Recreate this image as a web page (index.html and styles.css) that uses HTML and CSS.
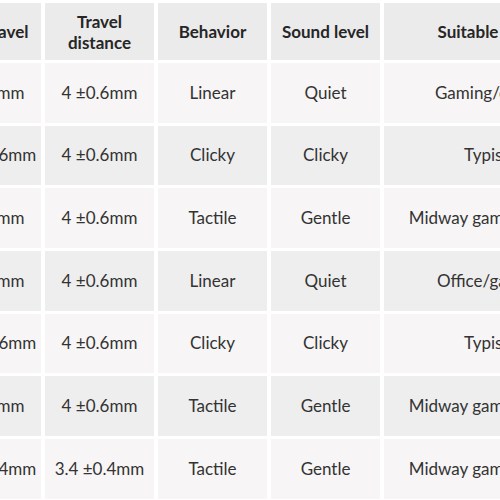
FILE: index.html
```html
<!DOCTYPE html>
<html>
<head>
<meta charset="utf-8">
<link rel="stylesheet" href="styles.css">
</head>
<body>
<div class="viewport">
<table class="spec">
<thead>
<tr>
<th class="cm">Total travel</th>
<th class="cm">Travel distance</th>
<th class="cm">Behavior</th>
<th class="cm">Sound level</th>
<th class="c5">Suitable users</th>
</tr>
</thead>
<tbody>
<tr><td>2 ±0.6mm</td><td>4 ±0.6mm</td><td>Linear</td><td>Quiet</td><td>Gaming/casual</td></tr>
<tr><td>2.25 ±0.6mm</td><td>4 ±0.6mm</td><td>Clicky</td><td>Clicky</td><td>Typists</td></tr>
<tr><td>2 ±0.6mm</td><td>4 ±0.6mm</td><td>Tactile</td><td>Gentle</td><td>Midway gaming/work</td></tr>
<tr><td>2 ±0.6mm</td><td>4 ±0.6mm</td><td>Linear</td><td>Quiet</td><td>Office/gaming</td></tr>
<tr><td>2.25 ±0.6mm</td><td>4 ±0.6mm</td><td>Clicky</td><td>Clicky</td><td>Typists</td></tr>
<tr><td>2 ±0.6mm</td><td>4 ±0.6mm</td><td>Tactile</td><td>Gentle</td><td>Midway gaming/work</td></tr>
<tr><td>1.25 ±0.4mm</td><td>3.4 ±0.4mm</td><td>Tactile</td><td>Gentle</td><td>Midway gaming/work</td></tr>
</tbody>
</table>
</div>
</body>
</html>
```
FILE: styles.css
```css
html, body {
  margin: 0;
  padding: 0;
  background: #ffffff;
}
body {
  width: 500px;
  height: 500px;
  overflow: hidden;
  font-family: Lato, "Noto Sans", sans-serif;
  color: #333333;
}
.viewport {
  width: 500px;
  overflow: hidden;
}
.spec {
  border-collapse: separate;
  border-spacing: 4px 3px;
  margin-left: -72px;
  table-layout: fixed;
  width: 672px;
  white-space: nowrap;
}
.spec th, .spec td {
  box-sizing: border-box;
  text-align: center;
  padding: 0 4px;
}
.spec th.cm { width: 109px; white-space: normal; padding: 0 3px; }
.spec th.c5 { width: 212px; }
.spec th {
  height: 57px;
  background: #ebebeb;
  color: #262626;
  font-weight: 700;
  font-size: 17px;
  line-height: 21px;
}
.spec td {
  height: 59.67px;
  font-size: 17px;
  line-height: 20px;
  background: #f7f5f5;
}
.spec tbody tr:nth-child(even) td {
  background: #eeeeee;
}
```
